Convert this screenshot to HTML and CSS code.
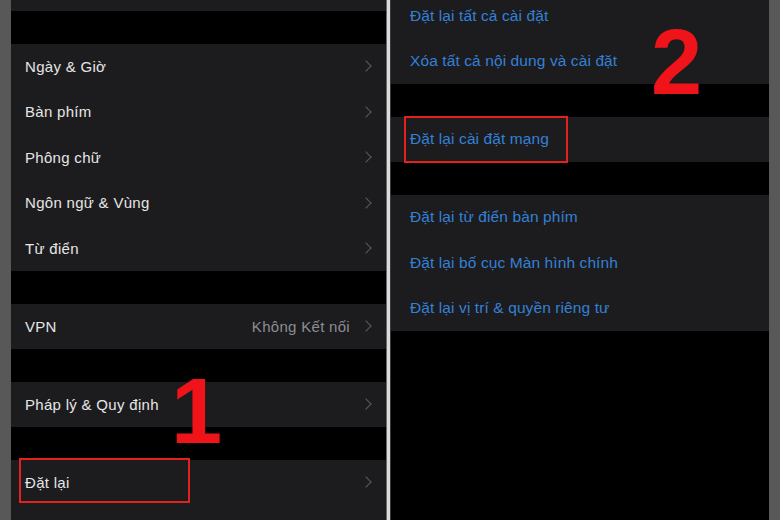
FILE: index.html
```html
<!DOCTYPE html>
<html lang="vi">
<head>
<meta charset="utf-8">
<link rel="stylesheet" href="styles.css">
</head>
<body>
<div class="screen">
  <div class="edge"></div>
  <div class="panel panel-left">
    <div class="list">
      <div class="row row-partial"></div>
      <div class="gap"></div>
      <div class="group">
        <div class="row"><span class="label">Ngày &amp; Giờ</span><span class="chev"></span></div>
        <div class="row"><span class="label">Bàn phím</span><span class="chev"></span></div>
        <div class="row"><span class="label">Phông chữ</span><span class="chev"></span></div>
        <div class="row"><span class="label">Ngôn ngữ &amp; Vùng</span><span class="chev"></span></div>
        <div class="row"><span class="label">Từ điển</span><span class="chev"></span></div>
      </div>
      <div class="gap"></div>
      <div class="group">
        <div class="row"><span class="label">VPN</span><span class="value">Không Kết nối</span><span class="chev"></span></div>
      </div>
      <div class="gap"></div>
      <div class="group">
        <div class="row"><span class="label">Pháp lý &amp; Quy định</span><span class="chev"></span></div>
      </div>
      <div class="gap"></div>
      <div class="group">
        <div class="row"><span class="label">Đặt lại</span><span class="chev"></span></div>
        <div class="row"></div>
      </div>
    </div>
  </div>
  <div class="divider"></div>
  <div class="panel panel-right">
    <div class="list list-shifted">
      <div class="group">
        <div class="row"><span class="link">Đặt lại tất cả cài đặt</span></div>
        <div class="row"><span class="link">Xóa tất cả nội dung và cài đặt</span></div>
      </div>
      <div class="gap"></div>
      <div class="group">
        <div class="row"><span class="link">Đặt lại cài đặt mạng</span></div>
      </div>
      <div class="gap"></div>
      <div class="group">
        <div class="row"><span class="link">Đặt lại từ điển bàn phím</span></div>
        <div class="row"><span class="link">Đặt lại bố cục Màn hình chính</span></div>
        <div class="row"><span class="link">Đặt lại vị trí &amp; quyền riêng tư</span></div>
      </div>
    </div>
  </div>
  <div class="edge"></div>

  <div class="mark mark-left"></div>
  <div class="mark mark-right"></div>
  <div class="step step-1">1</div>
  <div class="step step-2">2</div>
</div>
</body>
</html>
```

FILE: styles.css
```css
html, body {
  margin: 0;
  padding: 0;
  background: #565656;
}

body {
  width: 780px;
  height: 520px;
  overflow: hidden;
  font-family: "Liberation Sans", Arial, sans-serif;
}

.screen {
  position: relative;
  display: flex;
  width: 780px;
  height: 520px;
}

.edge {
  width: 11px;
  flex: none;
  background: #585858;
}

.panel {
  background: #000;
  overflow: hidden;
  height: 520px;
}

.panel-left {
  width: 375px;
  flex: none;
}

.panel-right {
  width: 378px;
  flex: none;
}

.divider {
  width: 3px;
  flex: none;
  background: #dcdcdc;
  border-left: 1px solid #6a6a6a;
  border-right: 1px solid #3a3a3a;
}

.list {
  display: flex;
  flex-direction: column;
}

.list-shifted {
  margin-top: -7px;
}

.gap {
  height: 32.5px;
  flex: none;
}

.group {
  background: #1c1c1e;
}

.row {
  height: 45.5px;
  display: flex;
  align-items: center;
  background: #1c1c1e;
  box-sizing: border-box;
}

.row-partial {
  height: 11px;
}

.panel-left .row {
  padding: 0 13px 0 14px;
}

.panel-right .row {
  padding: 0 16px 0 19px;
}

.label {
  flex: 1;
  color: #e6e6e6;
  font-size: 15px;
  letter-spacing: 0.3px;
}

.value {
  color: #8d8d92;
  font-size: 15px;
  letter-spacing: 0.3px;
  margin-right: 12px;
}

.chev {
  width: 7px;
  height: 7px;
  border-top: 1.6px solid #5c5c60;
  border-right: 1.6px solid #5c5c60;
  transform: rotate(45deg);
  margin-right: 3px;
}

.link {
  color: #3480d6;
  font-size: 15.5px;
  letter-spacing: 0.1px;
}

.mark {
  position: absolute;
  border: 2px solid #e3221d;
  box-sizing: border-box;
}

.mark-left {
  left: 19px;
  top: 458px;
  width: 171px;
  height: 45px;
}

.mark-right {
  left: 404px;
  top: 116px;
  width: 164px;
  height: 47px;
}

.step {
  position: absolute;
  color: #f0141a;
  font-family: "Liberation Sans", Arial, sans-serif;
  font-weight: bold;
  font-size: 92px;
  line-height: 1;
}

.step-1 {
  left: 171px;
  top: 365px;
}

.step-2 {
  left: 651px;
  top: 16px;
}
```
